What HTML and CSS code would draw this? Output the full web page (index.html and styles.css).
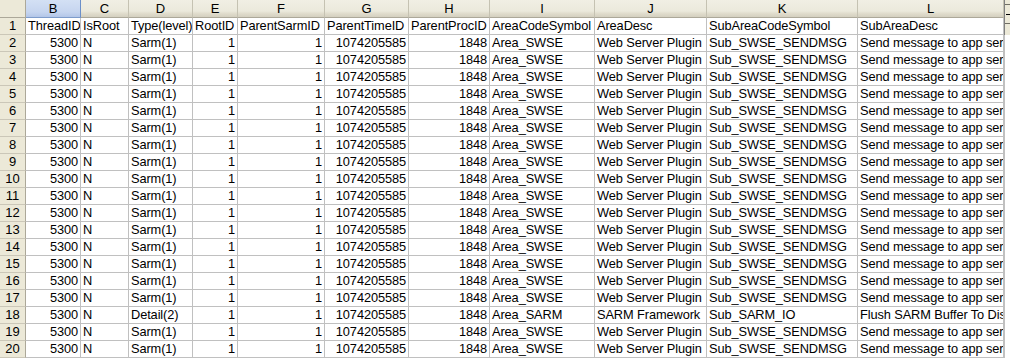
FILE: index.html
```html
<!DOCTYPE html>
<html>
<head>
<meta charset="utf-8">
<link rel="stylesheet" href="styles.css">
</head>
<body>
<div class="sheet">
  <div class="grid">
    <div class="corner"></div>
    <div class="ch sel">B</div><div class="ch">C</div><div class="ch">D</div><div class="ch">E</div><div class="ch">F</div><div class="ch">G</div><div class="ch">H</div><div class="ch">I</div><div class="ch">J</div><div class="ch">K</div><div class="ch">L</div>

    <div class="rh">1</div><div class="c">ThreadID</div><div class="c">IsRoot</div><div class="c">Type(level)</div><div class="c">RootID</div><div class="c">ParentSarmID</div><div class="c">ParentTimeID</div><div class="c">ParentProcID</div><div class="c">AreaCodeSymbol</div><div class="c">AreaDesc</div><div class="c">SubAreaCodeSymbol</div><div class="c">SubAreaDesc</div>

    <div class="rh">2</div><div class="c n">5300</div><div class="c">N</div><div class="c">Sarm(1)</div><div class="c n">1</div><div class="c n">1</div><div class="c n">1074205585</div><div class="c n">1848</div><div class="c">Area_SWSE</div><div class="c">Web Server Plugin</div><div class="c">Sub_SWSE_SENDMSG</div><div class="c">Send message to app server</div>
    <div class="rh">3</div><div class="c n">5300</div><div class="c">N</div><div class="c">Sarm(1)</div><div class="c n">1</div><div class="c n">1</div><div class="c n">1074205585</div><div class="c n">1848</div><div class="c">Area_SWSE</div><div class="c">Web Server Plugin</div><div class="c">Sub_SWSE_SENDMSG</div><div class="c">Send message to app server</div>
    <div class="rh">4</div><div class="c n">5300</div><div class="c">N</div><div class="c">Sarm(1)</div><div class="c n">1</div><div class="c n">1</div><div class="c n">1074205585</div><div class="c n">1848</div><div class="c">Area_SWSE</div><div class="c">Web Server Plugin</div><div class="c">Sub_SWSE_SENDMSG</div><div class="c">Send message to app server</div>
    <div class="rh">5</div><div class="c n">5300</div><div class="c">N</div><div class="c">Sarm(1)</div><div class="c n">1</div><div class="c n">1</div><div class="c n">1074205585</div><div class="c n">1848</div><div class="c">Area_SWSE</div><div class="c">Web Server Plugin</div><div class="c">Sub_SWSE_SENDMSG</div><div class="c">Send message to app server</div>
    <div class="rh">6</div><div class="c n">5300</div><div class="c">N</div><div class="c">Sarm(1)</div><div class="c n">1</div><div class="c n">1</div><div class="c n">1074205585</div><div class="c n">1848</div><div class="c">Area_SWSE</div><div class="c">Web Server Plugin</div><div class="c">Sub_SWSE_SENDMSG</div><div class="c">Send message to app server</div>
    <div class="rh">7</div><div class="c n">5300</div><div class="c">N</div><div class="c">Sarm(1)</div><div class="c n">1</div><div class="c n">1</div><div class="c n">1074205585</div><div class="c n">1848</div><div class="c">Area_SWSE</div><div class="c">Web Server Plugin</div><div class="c">Sub_SWSE_SENDMSG</div><div class="c">Send message to app server</div>
    <div class="rh">8</div><div class="c n">5300</div><div class="c">N</div><div class="c">Sarm(1)</div><div class="c n">1</div><div class="c n">1</div><div class="c n">1074205585</div><div class="c n">1848</div><div class="c">Area_SWSE</div><div class="c">Web Server Plugin</div><div class="c">Sub_SWSE_SENDMSG</div><div class="c">Send message to app server</div>
    <div class="rh">9</div><div class="c n">5300</div><div class="c">N</div><div class="c">Sarm(1)</div><div class="c n">1</div><div class="c n">1</div><div class="c n">1074205585</div><div class="c n">1848</div><div class="c">Area_SWSE</div><div class="c">Web Server Plugin</div><div class="c">Sub_SWSE_SENDMSG</div><div class="c">Send message to app server</div>
    <div class="rh">10</div><div class="c n">5300</div><div class="c">N</div><div class="c">Sarm(1)</div><div class="c n">1</div><div class="c n">1</div><div class="c n">1074205585</div><div class="c n">1848</div><div class="c">Area_SWSE</div><div class="c">Web Server Plugin</div><div class="c">Sub_SWSE_SENDMSG</div><div class="c">Send message to app server</div>
    <div class="rh">11</div><div class="c n">5300</div><div class="c">N</div><div class="c">Sarm(1)</div><div class="c n">1</div><div class="c n">1</div><div class="c n">1074205585</div><div class="c n">1848</div><div class="c">Area_SWSE</div><div class="c">Web Server Plugin</div><div class="c">Sub_SWSE_SENDMSG</div><div class="c">Send message to app server</div>
    <div class="rh">12</div><div class="c n">5300</div><div class="c">N</div><div class="c">Sarm(1)</div><div class="c n">1</div><div class="c n">1</div><div class="c n">1074205585</div><div class="c n">1848</div><div class="c">Area_SWSE</div><div class="c">Web Server Plugin</div><div class="c">Sub_SWSE_SENDMSG</div><div class="c">Send message to app server</div>
    <div class="rh">13</div><div class="c n">5300</div><div class="c">N</div><div class="c">Sarm(1)</div><div class="c n">1</div><div class="c n">1</div><div class="c n">1074205585</div><div class="c n">1848</div><div class="c">Area_SWSE</div><div class="c">Web Server Plugin</div><div class="c">Sub_SWSE_SENDMSG</div><div class="c">Send message to app server</div>
    <div class="rh">14</div><div class="c n">5300</div><div class="c">N</div><div class="c">Sarm(1)</div><div class="c n">1</div><div class="c n">1</div><div class="c n">1074205585</div><div class="c n">1848</div><div class="c">Area_SWSE</div><div class="c">Web Server Plugin</div><div class="c">Sub_SWSE_SENDMSG</div><div class="c">Send message to app server</div>
    <div class="rh">15</div><div class="c n">5300</div><div class="c">N</div><div class="c">Sarm(1)</div><div class="c n">1</div><div class="c n">1</div><div class="c n">1074205585</div><div class="c n">1848</div><div class="c">Area_SWSE</div><div class="c">Web Server Plugin</div><div class="c">Sub_SWSE_SENDMSG</div><div class="c">Send message to app server</div>
    <div class="rh">16</div><div class="c n">5300</div><div class="c">N</div><div class="c">Sarm(1)</div><div class="c n">1</div><div class="c n">1</div><div class="c n">1074205585</div><div class="c n">1848</div><div class="c">Area_SWSE</div><div class="c">Web Server Plugin</div><div class="c">Sub_SWSE_SENDMSG</div><div class="c">Send message to app server</div>
    <div class="rh">17</div><div class="c n">5300</div><div class="c">N</div><div class="c">Sarm(1)</div><div class="c n">1</div><div class="c n">1</div><div class="c n">1074205585</div><div class="c n">1848</div><div class="c">Area_SWSE</div><div class="c">Web Server Plugin</div><div class="c">Sub_SWSE_SENDMSG</div><div class="c">Send message to app server</div>
    <div class="rh">18</div><div class="c n">5300</div><div class="c">N</div><div class="c">Detail(2)</div><div class="c n">1</div><div class="c n">1</div><div class="c n">1074205585</div><div class="c n">1848</div><div class="c">Area_SARM</div><div class="c">SARM Framework</div><div class="c">Sub_SARM_IO</div><div class="c">Flush SARM Buffer To Disk</div>
    <div class="rh">19</div><div class="c n">5300</div><div class="c">N</div><div class="c">Sarm(1)</div><div class="c n">1</div><div class="c n">1</div><div class="c n">1074205585</div><div class="c n">1848</div><div class="c">Area_SWSE</div><div class="c">Web Server Plugin</div><div class="c">Sub_SWSE_SENDMSG</div><div class="c">Send message to app server</div>
    <div class="rh">20</div><div class="c n">5300</div><div class="c">N</div><div class="c">Sarm(1)</div><div class="c n">1</div><div class="c n">1</div><div class="c n">1074205585</div><div class="c n">1848</div><div class="c">Area_SWSE</div><div class="c">Web Server Plugin</div><div class="c">Sub_SWSE_SENDMSG</div><div class="c">Send message to app server</div>
  </div>
  <div class="edge">
    <div class="edge-top"><div class="edge-btn"><span class="edge-dash"></span></div></div>
    <div class="edge-rest"></div>
  </div>
</div>
</body>
</html>
```

FILE: styles.css
```css
html, body {
  margin: 0;
  padding: 0;
  background: #ffffff;
  overflow: hidden;
}

.sheet {
  display: flex;
  width: 1010px;
  height: 358px;
  font-family: "Liberation Sans", Arial, sans-serif;
  font-size: 12.8px;
  letter-spacing: -0.1px;
  color: #000000;
}

.grid {
  display: grid;
  grid-template-columns: 26px 55px 48px 64px 45px 87px 84px 81px 105px 112px 151px 146px;
  grid-template-rows: 18px;
  grid-auto-rows: 17px;
  width: 1004px;
  flex: none;
}

.grid > div {
  box-sizing: border-box;
  overflow: hidden;
  white-space: nowrap;
}

.corner {
  background: #ece9d8;
  border-right: 1px solid #aca899;
  border-bottom: 1px solid #aca899;
}

.ch {
  background: linear-gradient(#f1efe4 0%, #ebe9dc 65%, #e0dccc 80%, #d4d0c0 100%);
  border-right: 1px solid #c5c2b2;
  border-bottom: 1px solid #aca899;
  text-align: center;
  line-height: 17px;
  font-size: 13px;
  letter-spacing: 0;
}

.ch.sel {
  background: linear-gradient(#d3e0f4 0%, #c6d5ef 70%, #b3c6e8 100%);
  border-right: 1px solid #6b8fc9;
  border-bottom: 1px solid #7e9ccb;
}

.rh {
  background: #ece9d8;
  border-right: 1px solid #aca899;
  border-bottom: 1px solid #cbc7b8;
  text-align: center;
  line-height: 16px;
  font-size: 13px;
  letter-spacing: 0;
}

.c {
  border-right: 1px solid #c0c0c0;
  border-bottom: 1px solid #c0c0c0;
  padding: 0 2px;
  line-height: 16px;
  text-align: left;
}

.c.n {
  text-align: right;
}

.edge {
  flex: 1;
  display: flex;
  flex-direction: column;
}

.edge-top {
  height: 35px;
  background: #ece9d8;
  border-left: 1px solid #808080;
  box-sizing: border-box;
  padding-top: 4px;
}

.edge-btn {
  height: 18px;
  border-top: 1px solid #716f64;
  border-bottom: 1px solid #716f64;
  display: flex;
  align-items: center;
}

.edge-dash {
  display: block;
  width: 4px;
  height: 1px;
  margin-left: 1px;
  background: #000000;
}

.edge-rest {
  flex: 1;
  border-left: 1px solid #c0c0c0;
  background: #ffffff;
}
```
